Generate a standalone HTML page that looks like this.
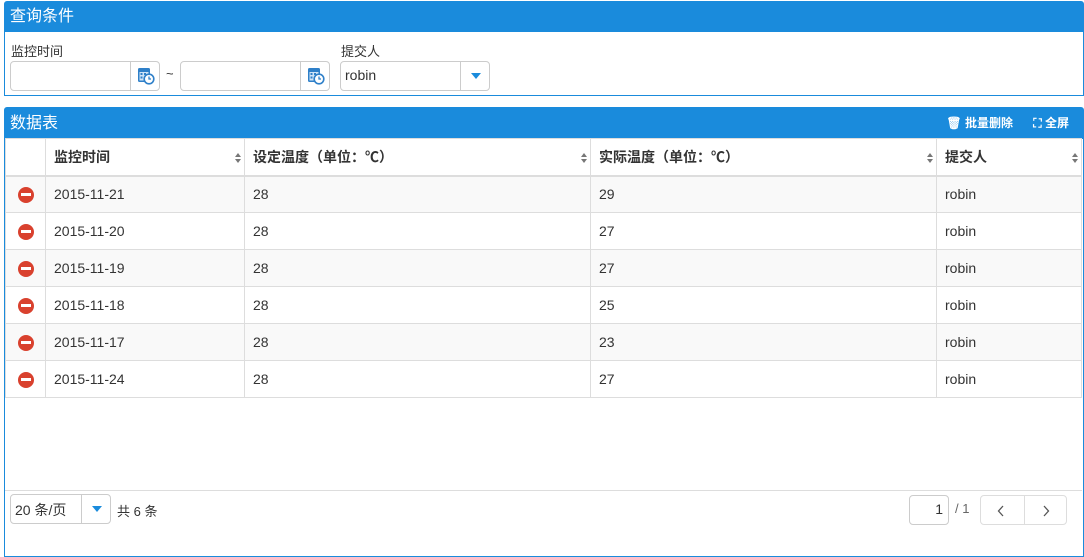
<!DOCTYPE html><html><head><meta charset="utf-8"><style>
*{box-sizing:border-box;margin:0;padding:0}
body{width:1084px;height:530px;overflow:hidden;background:#fff;font-family:"Liberation Sans","Noto Sans CJK SC",sans-serif;font-size:14px;color:#333;position:relative}
.abs{position:absolute}
.panel{position:absolute;left:4px;width:1080px;border:1px solid #1a8bdc;border-radius:3px 3px 0 0}
.hd{background:#1a8bdc;color:#fff;font-size:16px;height:30px;line-height:30px;padding-left:5px}
.inp{position:absolute;height:30px;border:1px solid #ccc;border-radius:4px;background:#fff}
.inp .btn{position:absolute;right:0;top:0;width:29px;height:28px;border-left:1px solid #ccc}
table{border-collapse:collapse;position:absolute;left:0;top:30px;width:1077px}
td,th{border:1px solid #ddd;height:37px;padding-left:8px;text-align:left;font-size:14px}
th{font-weight:bold;position:relative;border-bottom:2px solid #ddd}
tr.o td{background:#f9f9f9}
.sort{position:absolute;right:6px;top:15px;width:0;height:0}
.sort:before{content:"";position:absolute;left:-3.5px;top:-1px;border:3.5px solid transparent;border-bottom:4px solid #777;border-top:0}
.sort:after{content:"";position:absolute;left:-3.5px;top:5px;border:3.5px solid transparent;border-top:4px solid #777;border-bottom:0}
.del{display:inline-block;width:16px;height:16px;border-radius:50%;background:#d9412e;position:relative;vertical-align:middle;margin-left:4px}
.del:after{content:"";position:absolute;left:3px;top:6.5px;width:10px;height:3px;background:#fff}
.caret{position:absolute;border:5px solid transparent;border-top:6px solid #1a8bdc;border-bottom:0}
.cal{position:absolute;left:6px;top:5px}
</style></head><body>
<div class="panel" style="top:1px;height:95px">
<div class="hd">查询条件</div>
<div class="abs" style="left:6px;top:39px;font-size:13px">监控时间</div>
<div class="abs" style="left:336px;top:39px;font-size:13px">提交人</div>
<div class="inp" style="left:5px;top:59px;width:150px"><div class="btn"><svg class="cal" width="18" height="18" viewBox="0 0 18 18"><rect x="1" y="1" width="12" height="14" rx="1.5" fill="#2f80c9"/><rect x="2.5" y="5" width="9" height="8.5" fill="#cfe4f7"/><g fill="#2f80c9"><rect x="3.5" y="6" width="2" height="2"/><rect x="7" y="6" width="2" height="2"/><rect x="3.5" y="9.5" width="2" height="2"/></g><circle cx="12" cy="12" r="4.8" fill="#fff" stroke="#2f80c9" stroke-width="1.6"/><path d="M12 9.5V12h2" stroke="#2f80c9" stroke-width="1.3" fill="none"/></svg></div></div>
<div class="abs" style="left:161px;top:64px;font-size:13px">~</div>
<div class="inp" style="left:175px;top:59px;width:150px"><div class="btn"><svg class="cal" width="18" height="18" viewBox="0 0 18 18"><rect x="1" y="1" width="12" height="14" rx="1.5" fill="#2f80c9"/><rect x="2.5" y="5" width="9" height="8.5" fill="#cfe4f7"/><g fill="#2f80c9"><rect x="3.5" y="6" width="2" height="2"/><rect x="7" y="6" width="2" height="2"/><rect x="3.5" y="9.5" width="2" height="2"/></g><circle cx="12" cy="12" r="4.8" fill="#fff" stroke="#2f80c9" stroke-width="1.6"/><path d="M12 9.5V12h2" stroke="#2f80c9" stroke-width="1.3" fill="none"/></svg></div></div>
<div class="inp" style="left:335px;top:59px;width:150px"><span class="abs" style="left:4px;top:5px">robin</span><div class="btn"><i class="caret" style="left:10px;top:11px"></i></div></div>
</div>
<div class="panel" style="top:107px;height:450px">
<div class="hd" style="height:31px;line-height:31px">数据表
<span class="abs" style="right:70px;top:0;font-size:12px;font-weight:bold">🗑 批量删除</span>
<span class="abs" style="right:14px;top:0;font-size:12px;font-weight:bold">⛶ 全屏</span></div>
<table>
<tr><th style="width:40px"></th><th style="width:199px">监控时间<i class="sort"></i></th><th style="width:346px">设定温度（单位：℃）<i class="sort"></i></th><th style="width:346px">实际温度（单位：℃）<i class="sort"></i></th><th>提交人<i class="sort"></i></th></tr>
<tr class="o"><td><i class="del"></i></td><td>2015-11-21</td><td>28</td><td>29</td><td>robin</td></tr>
<tr><td><i class="del"></i></td><td>2015-11-20</td><td>28</td><td>27</td><td>robin</td></tr>
<tr class="o"><td><i class="del"></i></td><td>2015-11-19</td><td>28</td><td>27</td><td>robin</td></tr>
<tr><td><i class="del"></i></td><td>2015-11-18</td><td>28</td><td>25</td><td>robin</td></tr>
<tr class="o"><td><i class="del"></i></td><td>2015-11-17</td><td>28</td><td>23</td><td>robin</td></tr>
<tr><td><i class="del"></i></td><td>2015-11-24</td><td>28</td><td>27</td><td>robin</td></tr>
</table>
<div class="abs" style="left:0;top:382px;width:1077px;border-top:1px solid #ddd"></div>
<div class="inp" style="left:5px;top:386px;width:101px"><span class="abs" style="left:4px;top:5px">20 条/页</span><div class="btn"><i class="caret" style="left:10px;top:11px"></i></div></div>
<div class="abs" style="left:112px;top:393px;font-size:13px">共 6 条</div>
<div class="inp" style="left:904px;top:387px;width:40px"><span class="abs" style="right:5px;top:5px">1</span></div>
<div class="abs" style="left:950px;top:393px;font-size:13px;color:#666">/ 1</div>
<div class="inp" style="left:975px;top:387px;width:87px;border-color:#ddd"><span class="abs" style="left:43px;top:0;height:28px;border-left:1px solid #ddd"></span><svg class="abs" style="left:16px;top:9px" width="8" height="12"><path d="M6 1L1.5 6L6 11" stroke="#555" stroke-width="1.3" fill="none"/></svg><svg class="abs" style="left:61px;top:9px" width="8" height="12"><path d="M2 1L6.5 6L2 11" stroke="#555" stroke-width="1.3" fill="none"/></svg></div>
</div>
</body></html>
